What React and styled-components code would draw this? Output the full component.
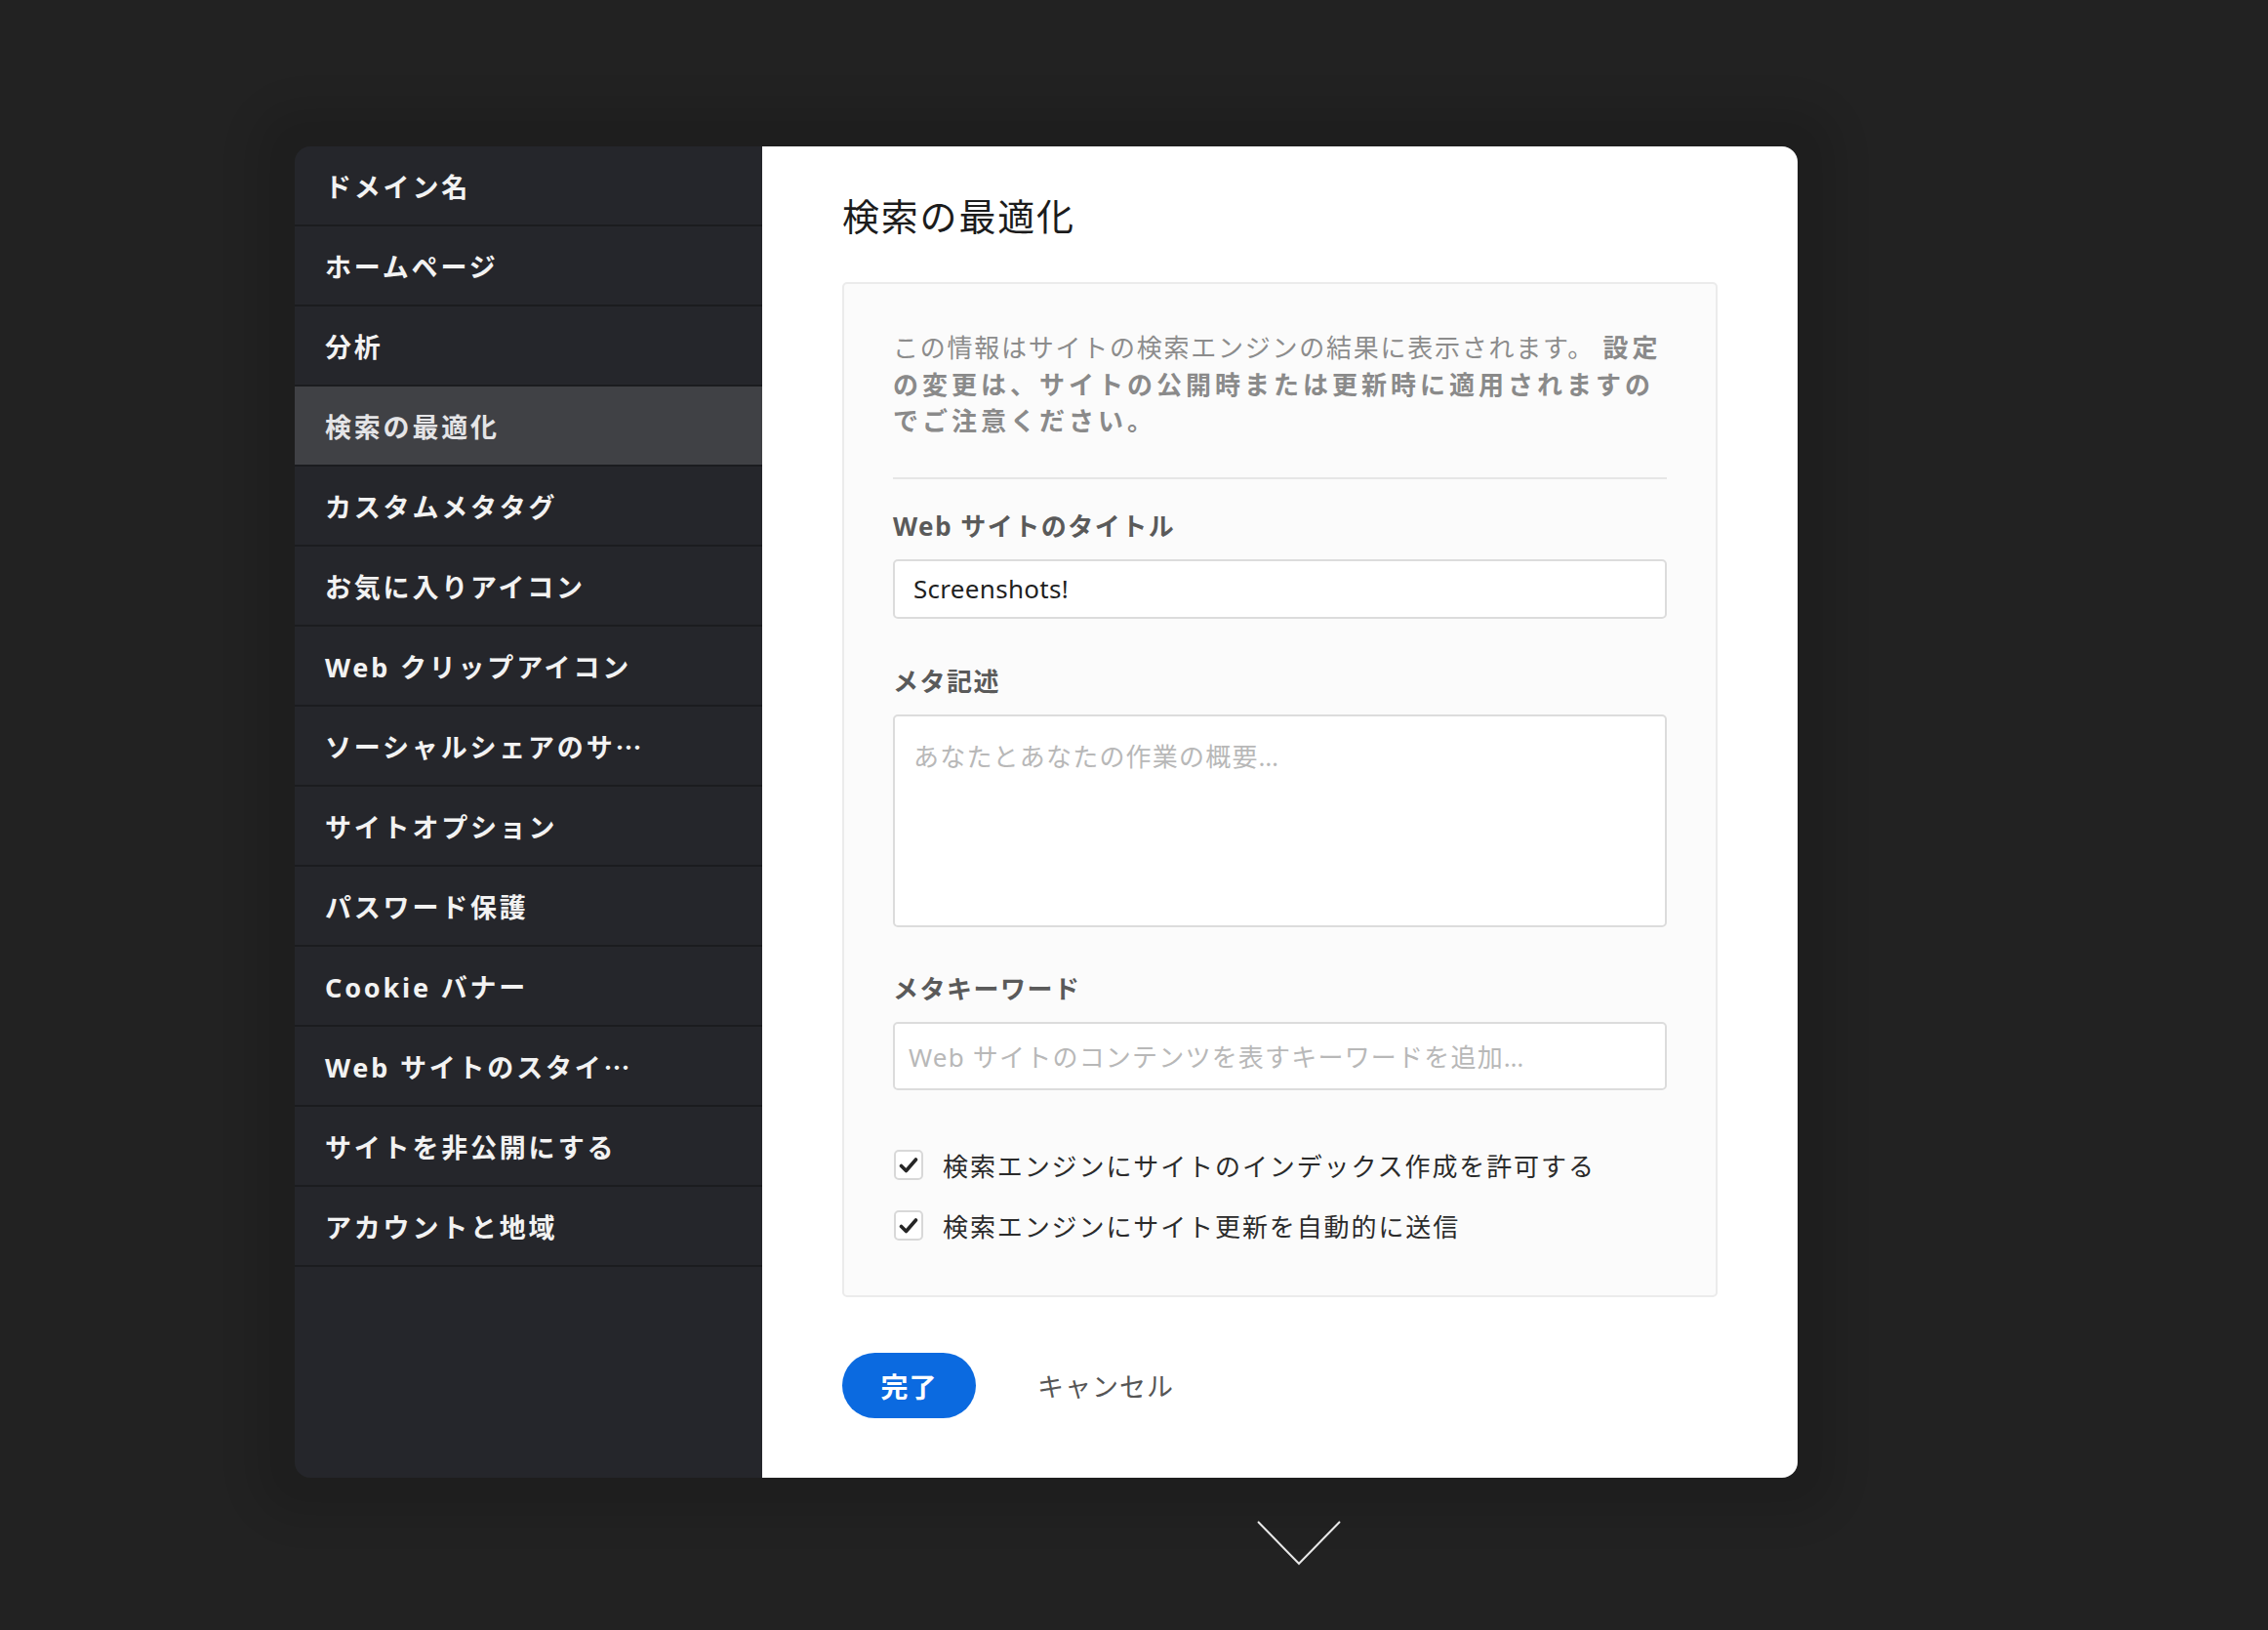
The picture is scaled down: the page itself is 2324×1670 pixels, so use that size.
import React from "react";
import styled, { createGlobalStyle } from "styled-components";

const GlobalStyle = createGlobalStyle`
  html, body { margin: 0; padding: 0; background: #222222; }
  body { font-family: "Noto Sans", "Noto Sans CJK JP", sans-serif; }
  * { box-sizing: border-box; }
`;

const Page = styled.div`
  min-height: 1670px;
  padding: 150px 0 0 302px;
  display: flex;
  flex-direction: column;
  align-items: flex-start;
`;

const Card = styled.div`
  width: 1540px;
  height: 1364px;
  display: flex;
  border-radius: 16px;
  box-shadow: 0 0 36px 42px rgba(0, 0, 0, 0.11);
`;

const Sidebar = styled.nav`
  width: 479px;
  flex-shrink: 0;
  background: #25262b;
  border-radius: 16px 0 0 16px;
  overflow: hidden;
  display: flex;
  flex-direction: column;
`;

const NavItem = styled.div`
  height: 82px;
  flex-shrink: 0;
  display: flex;
  align-items: center;
  padding: 0 31px;
  border-bottom: 2px solid #1b1c1f;
  background: ${(p) => (p.$active ? "#404145" : "transparent")};
  color: ${(p) => (p.$active ? "#e4e4e6" : "#f2f2f2")};
  font-family: "Noto Sans", "Noto Sans CJK JP", sans-serif;
  font-weight: 700;
  font-size: 27px;
  letter-spacing: 2.8px;
  white-space: nowrap;
`;

const Ellipsis = styled.span`
  font-family: "Noto Sans CJK JP", sans-serif;
`;

const Main = styled.main`
  flex: 1;
  background: #ffffff;
  border-radius: 0 16px 16px 0;
  padding: 48px 82px 0 82px;
  display: flex;
  flex-direction: column;
`;

const Title = styled.h1`
  margin: 0;
  font-family: "Noto Sans", "Noto Sans CJK JP", sans-serif;
  font-weight: 400;
  font-size: 38px;
  line-height: 46px;
  letter-spacing: 1.8px;
  color: #1c1c1c;
`;

const Box = styled.section`
  margin-top: 45px;
  height: 1040px;
  background: #fbfbfb;
  border: 2px solid #ebebeb;
  border-radius: 5px;
  padding: 47px 50px 0 50px;
  display: flex;
  flex-direction: column;
`;

const Description = styled.p`
  margin: 0;
  font-family: "Noto Sans", "Noto Sans CJK JP", sans-serif;
  font-size: 26px;
  line-height: 37.5px;
  color: #8c8c8c;
  letter-spacing: 1.75px;
  white-space: nowrap;
`;

const Strong = styled.b`
  font-weight: 700;
  letter-spacing: 4px;
  color: #8a8a8a;
`;

const Divider = styled.hr`
  margin: 38px 0 0 0;
  border: none;
  border-top: 2px solid #e6e6e6;
`;

const Label = styled.label`
  display: block;
  margin-top: ${(p) => p.$top}px;
  font-family: "Noto Sans", "Noto Sans CJK JP", sans-serif;
  font-weight: 700;
  font-size: 26px;
  line-height: 36px;
  letter-spacing: 1.5px;
  color: #5a5a5a;
`;

const Field = styled.div`
  margin-top: 16px;
  height: ${(p) => p.$h}px;
  background: #ffffff;
  border: 2px solid #dcdcdc;
  border-radius: 5px;
  display: flex;
  align-items: ${(p) => (p.$multi ? "flex-start" : "center")};
  padding: ${(p) => (p.$multi ? "21px 0 0 19px" : `0 0 0 ${p.$pl || 17}px`)};
  font-family: "Noto Sans", "Noto Sans CJK JP", sans-serif;
  font-size: 26px;
  letter-spacing: ${(p) => (p.$placeholder ? "1.2px" : "0.3px")};
  color: ${(p) => (p.$placeholder ? "#b8b8b8" : "#1f1f1f")};
  white-space: nowrap;
`;

const Checks = styled.div`
  margin-top: 57px;
  display: flex;
  flex-direction: column;
  gap: 22px;
`;

const CheckRow = styled.div`
  height: 40px;
  display: flex;
  align-items: center;
  gap: 20px;
  font-family: "Noto Sans", "Noto Sans CJK JP", sans-serif;
  font-size: 26px;
  letter-spacing: 1.9px;
  color: #2b2b2b;
`;

const CheckBox = styled.span`
  width: 30px;
  height: 31px;
  margin-left: 1px;
  border: 2px solid #d8d8d8;
  border-radius: 5px;
  background: #ffffff;
  display: flex;
  align-items: center;
  justify-content: center;
`;

const Actions = styled.div`
  margin-top: 57px;
  display: flex;
  align-items: center;
  gap: 63px;
`;

const DoneButton = styled.button`
  width: 137px;
  height: 67px;
  border: none;
  border-radius: 34px;
  background: #0b6ae0;
  color: #ffffff;
  font-family: "Noto Sans", "Noto Sans CJK JP", sans-serif;
  font-weight: 700;
  font-size: 28px;
  letter-spacing: 1px;
  padding: 0;
`;

const Cancel = styled.span`
  font-family: "Noto Sans", "Noto Sans CJK JP", sans-serif;
  font-size: 27px;
  letter-spacing: 1px;
  color: #555555;
`;

const Chevron = styled.svg`
  margin: 44px 0 0 986px;
  display: block;
`;

const items = [
  ["ドメイン名"],
  ["ホームページ"],
  ["分析"],
  ["検索の最適化"],
  ["カスタムメタタグ"],
  ["お気に入りアイコン"],
  ["Web クリップアイコン"],
  ["ソーシャルシェアのサ", true],
  ["サイトオプション"],
  ["パスワード保護"],
  ["Cookie バナー"],
  ["Web サイトのスタイ", true],
  ["サイトを非公開にする"],
  ["アカウントと地域"],
];

const Check = () => (
  <svg width="20" height="18" viewBox="0 0 20 18">
    <polyline
      points="2.5,9.5 7.5,14.5 17.5,3"
      fill="none"
      stroke="#262626"
      strokeWidth="3.6"
      strokeLinecap="round"
      strokeLinejoin="round"
    />
  </svg>
);

export default function App() {
  return (
    <>
      <GlobalStyle />
      <Page>
        <Card>
          <Sidebar>
            {items.map(([t, cut]) => (
              <NavItem key={t} $active={t === "検索の最適化"}>
                {t}
                {cut && <Ellipsis>…</Ellipsis>}
              </NavItem>
            ))}
          </Sidebar>
          <Main>
            <Title>検索の最適化</Title>
            <Box>
              <Description>
                この情報はサイトの検索エンジンの結果に表示されます。 <Strong>設定</Strong>
                <br />
                <Strong>の変更は、サイトの公開時または更新時に適用されますの</Strong>
                <br />
                <Strong>でご注意ください。</Strong>
              </Description>
              <Divider />
              <Label $top={30}>Web サイトのタイトル</Label>
              <Field $h={61} $pl={19}>Screenshots!</Field>
              <Label $top={46}>メタ記述</Label>
              <Field $h={218} $multi $placeholder>
                あなたとあなたの作業の概要…
              </Field>
              <Label $top={45}>メタキーワード</Label>
              <Field $h={70} $pl={14} $placeholder>
                Web サイトのコンテンツを表すキーワードを追加…
              </Field>
              <Checks>
                <CheckRow>
                  <CheckBox>
                    <Check />
                  </CheckBox>
                  検索エンジンにサイトのインデックス作成を許可する
                </CheckRow>
                <CheckRow>
                  <CheckBox>
                    <Check />
                  </CheckBox>
                  検索エンジンにサイト更新を自動的に送信
                </CheckRow>
              </Checks>
            </Box>
            <Actions>
              <DoneButton>完了</DoneButton>
              <Cancel>キャンセル</Cancel>
            </Actions>
          </Main>
        </Card>
        <Chevron width="86" height="46" viewBox="0 0 86 46">
          <polyline
            points="1,1 43,44 85,1"
            fill="none"
            stroke="#e8e8e8"
            strokeWidth="2"
          />
        </Chevron>
      </Page>
    </>
  );
}
